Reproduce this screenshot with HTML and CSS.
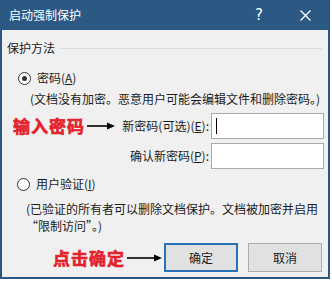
FILE: index.html
```html
<!DOCTYPE html>
<html lang="zh-CN">
<head>
    <meta charset="UTF-8">
    <title>启动强制保护</title>
    <link rel="stylesheet" href="styles.css">
</head>
<body>
    <!-- Dialog window -->
    <div class="dialog">
        <div class="titlebar">
            <span class="title">启动强制保护</span>
            <span class="help">?</span>
            <svg class="close" width="11" height="11" viewBox="0 0 11 11">
                <path d="M0.5 0.5 L10.5 10.5 M10.5 0.5 L0.5 10.5" stroke="#ffffff" stroke-width="1.3" fill="none"/>
            </svg>
        </div>

        <div class="content">
            <!-- Group header with the line -->
            <div class="group-title">
                <span>保护方法</span>
                <div class="group-line"></div>
            </div>

            <div class="radio-row first">
                <span class="radio checked"></span>
                <span>密码(<u>A</u>)</span>
            </div>
            <div class="desc first">(文档没有加密。恶意用户可能会编辑文件和删除密码。)</div>

            <div class="field-row pw">
                <span class="note">输入密码</span>
                <svg class="arrow" width="28" height="8" viewBox="0 0 28 8">
                    <path d="M0 4 H21" stroke="#000" stroke-width="1.6"/>
                    <path d="M20 0.5 L28 4 L20 7.5 Z" fill="#000"/>
                </svg>
                <span class="label">新密码(可选)(<u>E</u>):</span>
                <div class="input"><span class="caret"></span></div>
            </div>
            <div class="field-row confirm">
                <span class="label">确认新密码(<u>P</u>):</span>
                <div class="input"></div>
            </div>

            <div class="radio-row second">
                <span class="radio"></span>
                <span>用户验证(<u>I</u>)</span>
            </div>
            <div class="desc second">(已验证的所有者可以删除文档保护。文档被加密并启用<br>“限制访问”。)</div>

            <!-- Buttons -->
            <div class="buttons">
                <span class="note">点击确定</span>
                <svg class="arrow" width="35" height="8" viewBox="0 0 35 8">
                    <path d="M0 4 H28" stroke="#000" stroke-width="1.6"/>
                    <path d="M27 0.5 L35 4 L27 7.5 Z" fill="#000"/>
                </svg>
                <div class="btn ok">确定</div>
                <div class="btn cancel">取消</div>
            </div>
        </div>
    </div>
</body>
</html>
```

FILE: styles.css
```css
/* Base page */
html, body {
    margin: 0;
    padding: 0;
    background-color: #ffffff;
    font-family: "Noto Sans CJK SC", "Noto Sans", sans-serif;
    font-size: 12px;
    color: #1b1b1b;
}

/* The whole dialog with its blue frame */
.dialog {
    width: 326px;
    height: 277px;
    border: 2px solid #2b5983;
    border-top: none;
    background-color: #f0f0f0;
    display: flex;
    flex-direction: column;
}

/* Title bar */
.titlebar {
    height: 30px;
    margin: 0 -2px;
    padding-left: 9px;
    background-color: #2b5983;
    color: #ffffff;
    display: flex;
    align-items: center;
}

.title {
    font-size: 12px;
    line-height: 14px;
    flex: 1;
}

.help {
    font-family: "DejaVu Sans", sans-serif;
    font-size: 15px;
    margin-right: 37px;
}

.close {
    margin-right: 19px;
}

.content {
    padding: 10px 4px 0 0;
    display: flex;
    flex-direction: column;
}

/* Group title */
.group-title {
    display: flex;
    align-items: center;
    height: 16px;
    line-height: 16px;
    padding-left: 5px;
}

.group-line {
    flex: 1;
    height: 1px;
    background-color: #d7dcdf;
    margin-left: 5px;
    margin-right: 2px;
}

/* Radio rows */
.radio-row {
    display: flex;
    align-items: center;
    height: 16px;
    line-height: 16px;
}

.radio-row.first {
    margin-top: 14px;
    padding-left: 16px;
}

.radio-row.second {
    margin-top: 7px;
    padding-left: 15px;
}

.radio {
    width: 11px;
    height: 11px;
    border: 1px solid #333333;
    border-radius: 50%;
    background-color: #ffffff;
    margin-right: 6px;
    display: flex;
    align-items: center;
    justify-content: center;
}

.radio.checked::after {
    content: '';
    width: 5px;
    height: 5px;
    border-radius: 50%;
    background-color: #333333;
}

/* Descriptions */
.desc {
    line-height: 17px;
    white-space: nowrap;
}

.desc.first {
    margin-top: 4px;
    padding-left: 28px;
    height: 17px;
}

.desc.second {
    margin-top: 8px;
    padding-left: 24px;
}

/* Password fields */
.field-row {
    display: flex;
    align-items: center;
    height: 26px;
}

.field-row.pw {
    margin-top: 6px;
}

.field-row.confirm {
    margin-top: 4px;
}

.label {
    margin-left: auto;
    margin-right: 2px;
    line-height: 16px;
}

.input {
    width: 111px;
    height: 24px;
    border: 1px solid #a9a9a9;
    background-color: #ffffff;
    display: flex;
    align-items: center;
}

.caret {
    width: 1px;
    height: 16px;
    margin-left: 4px;
    background-color: #000000;
}

/* Red annotations */
.note {
    color: #e3212b;
    font-weight: bold;
    font-size: 17px;
    line-height: 20px;
    letter-spacing: 1px;
    -webkit-text-stroke: 0.6px #e3212b;
}

.pw .note {
    margin-left: 11px;
}

.arrow {
    margin-left: 2px;
}

/* Buttons */
.buttons {
    display: flex;
    align-items: center;
    margin-top: 9px;
    height: 29px;
}

.buttons .note {
    margin-left: 51px;
}

.btn {
    width: 72px;
    height: 27px;
    line-height: 27px;
    text-align: center;
    background-color: #e1e1e1;
    border: 1px solid #adadad;
}

.btn.ok {
    width: 70px;
    height: 25px;
    line-height: 25px;
    border: 2px solid #2a72b8;
    margin-left: 2px;
}

.btn.cancel {
    margin-left: 10px;
}
```
